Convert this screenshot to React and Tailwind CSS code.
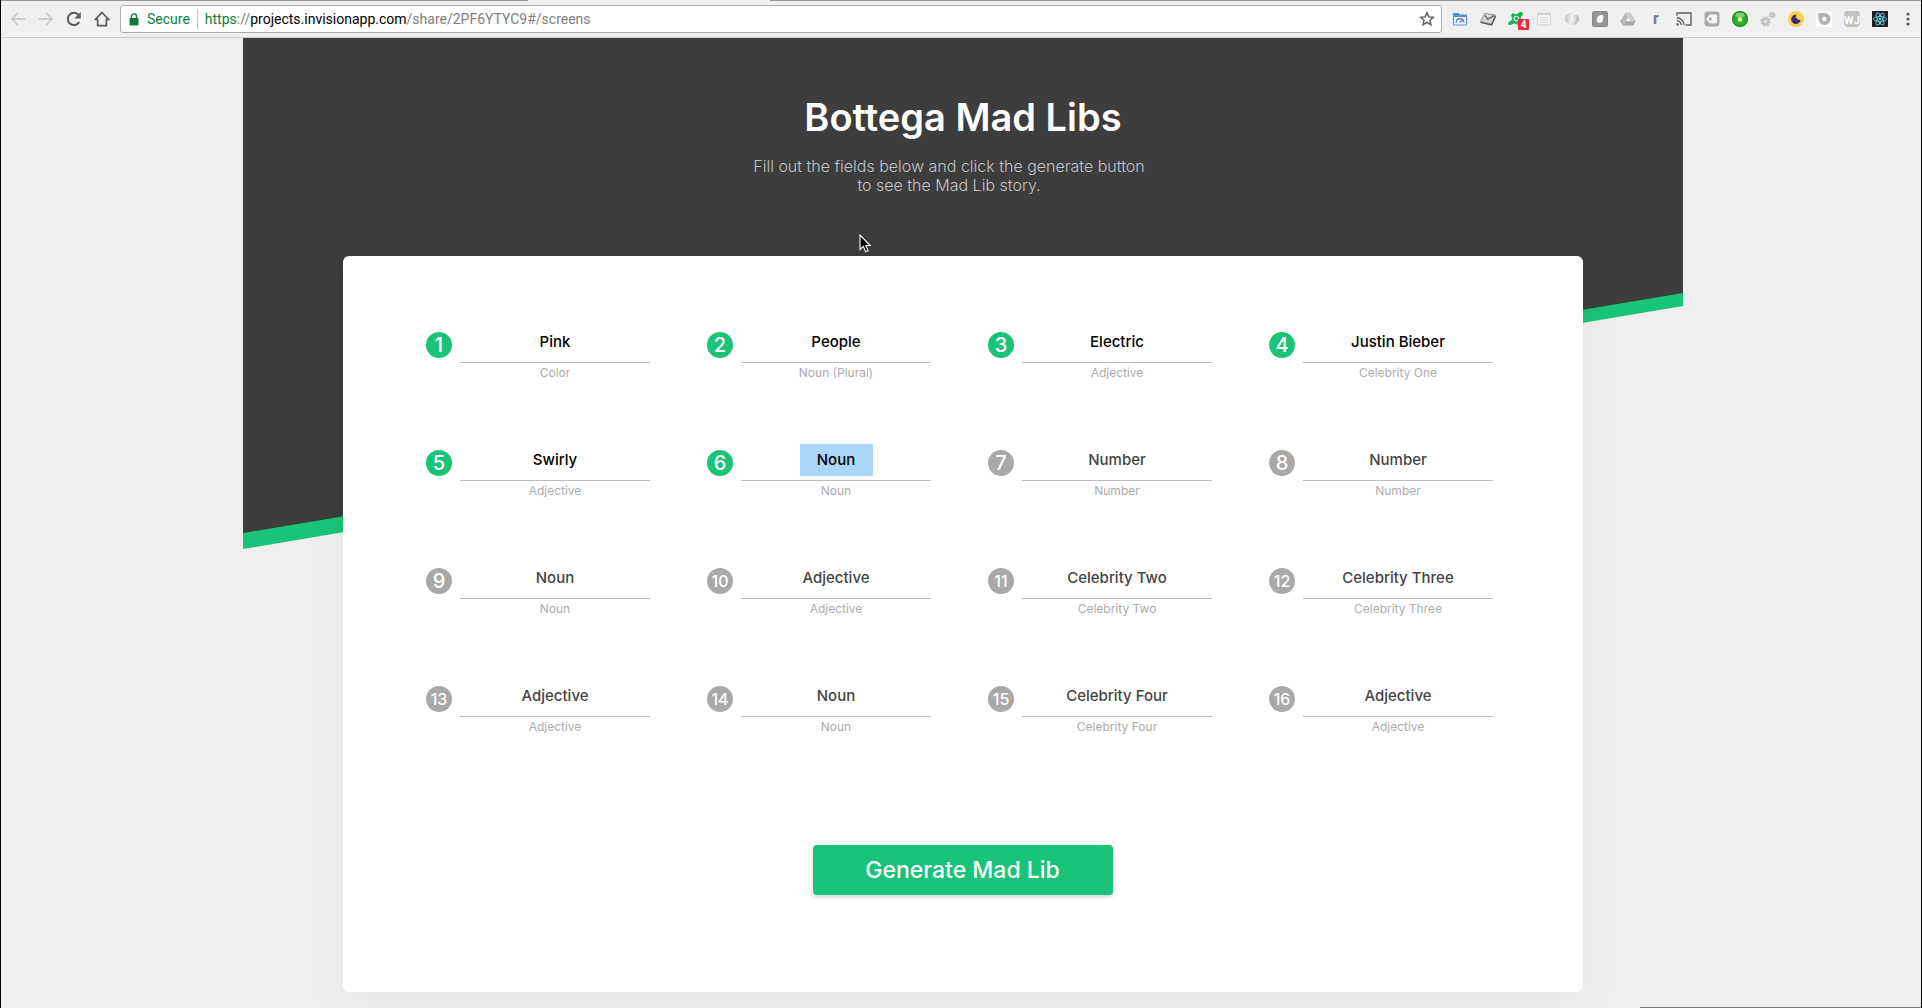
import React from "react";

const FIELDS = [
  { value: "Pink", label: "Color", done: true },
  { value: "People", label: "Noun (Plural)", done: true },
  { value: "Electric", label: "Adjective", done: true },
  { value: "Justin Bieber", label: "Celebrity One", done: true },
  { value: "Swirly", label: "Adjective", done: true },
  { value: "Noun", label: "Noun", done: true, selected: true },
  { value: "Number", label: "Number" },
  { value: "Number", label: "Number" },
  { value: "Noun", label: "Noun" },
  { value: "Adjective", label: "Adjective" },
  { value: "Celebrity Two", label: "Celebrity Two" },
  { value: "Celebrity Three", label: "Celebrity Three" },
  { value: "Adjective", label: "Adjective" },
  { value: "Noun", label: "Noun" },
  { value: "Celebrity Four", label: "Celebrity Four" },
  { value: "Adjective", label: "Adjective" },
];

const svg = { width: 16, height: 16, viewBox: "0 0 16 16", fill: "none" };

function ArrowLeft() {
  return (
    <svg {...svg} stroke="#cfcfcf" strokeWidth="1.9">
      <path d="M15 8H2M8 1.8 1.8 8 8 14.2" />
    </svg>
  );
}

function ArrowRight() {
  return (
    <svg {...svg} stroke="#cfcfcf" strokeWidth="1.9">
      <path d="M1 8h13M8 1.8 14.2 8 8 14.2" />
    </svg>
  );
}

function Reload() {
  return (
    <svg {...svg}>
      <path d="M13.2 11A6.1 6.1 0 1 1 12.4 3.8" stroke="#5a5a5a" strokeWidth="2" />
      <path d="M14.8 1v6.4H8.4z" fill="#5a5a5a" />
    </svg>
  );
}

function Home() {
  return (
    <svg {...svg} stroke="#5a5a5a" strokeWidth="1.7">
      <path d="M8 1.4 1.4 8.5h2.2v6.1h8.8V8.5h2.2z" strokeLinejoin="miter" />
    </svg>
  );
}

function Lock() {
  return (
    <svg width="10" height="13" viewBox="0 0 10 13" fill="none">
      <rect x="0.5" y="5" width="9" height="7.5" rx="0.8" fill="#0b7b3e" />
      <path d="M2.5 5.5V3.4a2.5 2.5 0 0 1 5 0v2.1" stroke="#0b7b3e" strokeWidth="1.4" />
    </svg>
  );
}

function Star() {
  return (
    <svg {...svg} stroke="#5a5a5a" strokeWidth="1.4">
      <path d="m8 1.7 1.8 4.2 4.6.4-3.5 3 1.1 4.5L8 11.4l-4 2.4 1.1-4.5-3.5-3 4.6-.4z" />
    </svg>
  );
}

function GaugeWindow() {
  return (
    <svg {...svg}>
      <path d="M1.5 2.5h5l1 1.500h7v10h-13z" fill="#eef4fd" stroke="#5b8fe0" strokeWidth="1.2" />
      <path d="M1.5 2.5h5l1 1.5h7v2h-13z" fill="#5b8fe0" />
      <path d="M4.200 11.500a3.800 3.800 0 0 1 7.600 0" stroke="#4a83d8" strokeWidth="1.500" />
      <path d="m7.500 11.500 3-2.500" stroke="#d05a5a" strokeWidth="1.200" />
    </svg>
  );
}

function TiltedMail() {
  return (
    <svg {...svg}>
      <path d="M4.800 2.500 15.600 4 11.400 13.200.4 10.600z" fill="#d6d6d6" stroke="#8a8a8a" strokeWidth="0.900" />
      <path d="m5 4.500 2.800 3.800L14 4.600" stroke="#666" strokeWidth="1.300" />
      <path d="m.6 11.400 11 2.500L15.600 5" stroke="#555" strokeWidth="1.300" />
    </svg>
  );
}

function GreenTag() {
  return (
    <span className="relative">
      <svg width="18" height="16" viewBox="0 0 18 16" fill="none">
        <path
          d="M5 2.500c1.600-.8 2.600 1 4.200.8 1.800 0 2.800-2.800 5.200-2.400 2 .5 2.200 2.600.6 3.800-1.600 1-1 2.200-1 4L11 14l-3.500-1.600c-2 0-3.200 2-5.400 1.600C.8 13.600.8 12 2 11c1.600-1.200 3.400-1.800 3-3.600C4.800 5.800 3.400 4 5 2.500z"
          fill="#12b35d"
        />
        <circle cx="9.300" cy="7.500" r="2.300" stroke="#d8f5e5" strokeWidth="1.100" />
      </svg>
      <span className="absolute -right-1 top-2 h-[11px] w-[11px] rounded-[1px] bg-[#e8283c] text-center text-[10px] font-bold leading-[11px] text-white">
        4
      </span>
    </span>
  );
}

function ListWindow() {
  return (
    <svg {...svg}>
      <rect x="1.500" y="2" width="13" height="12" rx="0.800" fill="#f8f8f8" stroke="#d0d0d0" />
      <path d="M1.500 3h13" stroke="#cdcdcd" strokeWidth="2" />
      <path d="M3.500 6.800h9M3.500 9.200h9M3.500 11.600h9" stroke="#d2d2d2" />
    </svg>
  );
}

function Swirl() {
  return (
    <svg {...svg}>
      <path d="M7 1.500C2.500 3 0 6 1 9.500c.7 2 2.500 3 4.500 2.800C3.500 10 3.500 5 7 1.500z" fill="#cfcfcf" />
      <path d="M9 14.500c4.500-1.500 7-4.500 6-8-.7-2-2.500-3-4.500-2.800C12.500 6 12.500 11 9 14.500z" fill="#c2c2c2" />
      <path d="M9 1.800c-3 2-4.500 5-3.500 9.500M7 14c3-2 4.500-5 3.500-9.500" stroke="#d8d8d8" strokeWidth="1.200" />
    </svg>
  );
}

function Leaf() {
  return (
    <svg {...svg}>
      <rect width="16" height="16" rx="2.500" fill="#8c8c8c" />
      <rect x="1.500" y="1.500" width="13" height="13" rx="2" fill="#979797" />
      <path d="M10.800 4c-3-.3-5.600 1-6 4-.3 2 .8 4 2.800 4 3.400 0 4.400-4.500 3.200-8z" fill="#fff" />
    </svg>
  );
}

function Drive() {
  return (
    <svg {...svg}>
      <path d="M5.300 1.800h5.400l5.100 8.400h-5.200z" fill="#cacaca" />
      <path d="M5.300 1.800 8 6.300 2.900 14.500.2 10.200z" fill="#b7b7b7" />
      <path d="M5.500 10.200h10.300l-2.700 4.300H2.900z" fill="#a9a9a9" />
    </svg>
  );
}

function Cast() {
  return (
    <svg {...svg} stroke="#5f5f5f" strokeWidth="1.400">
      <path d="M1 4.800V2h14v12H9.500" />
      <path d="M.8 6.800a7.200 7.200 0 0 1 7.200 7.200M.8 9.600A4.400 4.400 0 0 1 5.200 14" />
      <path d="M.5 12v2.600h2.600A2.600 2.600 0 0 0 .5 12z" fill="#5f5f5f" stroke="none" />
    </svg>
  );
}

function GreyTag() {
  return (
    <svg {...svg}>
      <rect x="0.500" y="0.500" width="15" height="15" rx="3" fill="#a9a9a9" />
      <path d="M6 4h6.500v8H6L2.500 8z" fill="#f5f5f5" stroke="#f5f5f5" strokeLinejoin="round" />
      <circle cx="6.300" cy="8" r="1.400" fill="#a0a0a0" />
    </svg>
  );
}

function GreenOrb() {
  return (
    <svg {...svg}>
      <circle cx="8" cy="8" r="8" fill="#168a16" />
      <circle cx="8" cy="8" r="6.800" fill="#2fae28" />
      <ellipse cx="8" cy="4" rx="4.500" ry="2.200" fill="#7ed070" />
      <circle cx="8" cy="8.500" r="2.400" fill="#c9f7a8" />
    </svg>
  );
}

function Gears() {
  return (
    <svg {...svg} stroke="#c2c2c2">
      <circle cx="5.500" cy="10.500" r="2.700" strokeWidth="2.600" />
      <circle cx="5.500" cy="10.500" r="4.500" strokeWidth="1.600" strokeDasharray="1.800 1.734" />
      <circle cx="12.200" cy="4" r="1.600" strokeWidth="1.800" />
      <circle cx="12.200" cy="4" r="2.900" strokeWidth="1.200" strokeDasharray="1.200 1.077" />
    </svg>
  );
}

function Moon() {
  return (
    <svg {...svg}>
      <circle cx="8" cy="8" r="8" fill="#fbd04f" />
      <path d="M8.200 3.500A4.800 4.800 0 1 0 12.700 9 4 4 0 0 1 8.200 3.500z" fill="#3f2a7d" />
    </svg>
  );
}

function Disc() {
  return (
    <svg {...svg}>
      <rect width="16" height="16" fill="#fff" />
      <path d="M2 2h6.500a6 6 0 1 1-6 6z" fill="#b2b2b2" />
      <circle cx="8.300" cy="8" r="2.200" fill="#fff" />
    </svg>
  );
}

function WjBadge() {
  return (
    <span className="h-4 w-4 overflow-hidden rounded-sm bg-[#c2c2c2] pt-0.5 text-center text-[11px] font-bold leading-[15px] text-white">
      WJ
    </span>
  );
}

function Atom() {
  return (
    <svg {...svg}>
      <rect width="16" height="16" fill="#202020" />
      <g stroke="#5ccbe8" strokeWidth="0.900">
        <ellipse cx="8" cy="8" rx="6.600" ry="2.500" />
        <ellipse cx="8" cy="8" rx="6.600" ry="2.500" transform="rotate(60 8 8)" />
        <ellipse cx="8" cy="8" rx="6.600" ry="2.500" transform="rotate(120 8 8)" />
      </g>
      <circle cx="8" cy="8" r="1.300" fill="#5ccbe8" />
    </svg>
  );
}

function Dots() {
  return (
    <svg {...svg} fill="#5a5a5a">
      <circle cx="8" cy="3" r="1.600" />
      <circle cx="8" cy="8" r="1.600" />
      <circle cx="8" cy="13" r="1.600" />
    </svg>
  );
}

function LetterR() {
  return <span className="text-base font-bold leading-4 text-[#7d7d7d]">r</span>;
}

const EXTENSIONS = [
  ["Page speed", GaugeWindow],
  ["Mail", TiltedMail],
  ["Notifications", GreenTag],
  ["Reader", ListWindow],
  ["Sync", Swirl],
  ["Evergreen", Leaf],
  ["Drive", Drive],
  ["Reddit", LetterR],
  ["Cast", Cast],
  ["Tags", GreyTag],
  ["Status", GreenOrb],
  ["Settings", Gears],
  ["Night mode", Moon],
  ["Disc", Disc],
  ["WJ", WjBadge],
  ["React tools", Atom],
  ["Menu", Dots],
];

function IconButton({ name, icon: Icon }) {
  return (
    <button type="button" aria-label={name} className="flex h-7 w-7 shrink-0 items-center justify-center">
      <Icon />
    </button>
  );
}

function Toolbar() {
  return (
    <div className="border-b border-[#cbcbcb] bg-[#f0f0f0] font-[Roboto,sans-serif]">
      <div className="flex h-px">
        <div className="w-[527px] bg-[#979597]" />
        <div className="w-[242px]" />
        <div className="flex-1 bg-[#979597]" />
      </div>
      <nav className="-mr-px flex h-9 items-center pl-[3px]" aria-label="Browser">
        <IconButton name="Back" icon={ArrowLeft} />
        <IconButton name="Forward" icon={ArrowRight} />
        <IconButton name="Reload" icon={Reload} />
        <IconButton name="Home" icon={Home} />
        <div className="ml-1 mr-1 flex h-7 min-w-0 flex-1 items-center rounded-[3px] border border-[#aeaeae] bg-white pl-2 text-sm">
          <Lock />
          <span className="ml-2 text-[#0b7b3e]">Secure</span>
          <span className="mx-[7px] h-5 w-px bg-[#c4c4c4]" />
          <a href="#/screens" className="flex-1 truncate text-[#808080]">
            <span className="text-[#0b7b3e]">https</span>://
            <span className="text-black">projects.invisionapp.com</span>/share/2PF6YTYC9#/screens
          </a>
          <IconButton name="Bookmark" icon={Star} />
        </div>
        {EXTENSIONS.map(([name, icon]) => (
          <IconButton key={name} name={name} icon={icon} />
        ))}
      </nav>
    </div>
  );
}

function Field({ number, value, label, done, selected }) {
  const id = `field-${number}`;
  return (
    <div className="flex gap-2">
      <span
        className={`mt-1.5 flex h-[26px] w-[26px] shrink-0 items-center justify-center rounded-full font-medium text-white ${
          done ? "bg-[#19c377]" : "bg-[#a9a9a9]"
        } ${number > 9 ? "text-base" : "text-xl"}`}
      >
        {number}
      </span>
      <div className="flex min-w-0 flex-1 flex-col items-center">
        <input
          id={id}
          type="text"
          defaultValue={value}
          className={`h-8 pb-0.5 text-center text-[15px] font-medium outline-none ${
            selected ? "w-[73px] bg-[#abd7fb]" : "w-full"
          } ${done ? "text-black" : "text-[#444444]"}`}
        />
        <label
          htmlFor={id}
          className="mt-1 w-full border-t border-[#bdbdbd] text-center text-xs leading-5 text-[#acacac]"
        >
          {label}
        </label>
      </div>
    </div>
  );
}

function Hero() {
  return (
    <div className="col-start-1 row-start-1 h-[511px] bg-[#19c377] [clip-path:polygon(0_0,100%_0,100%_268px,0_100%)]">
      <div className="h-[495px] bg-[#3d3d3d] [clip-path:polygon(0_0,100%_0,100%_255px,0_100%)]" />
    </div>
  );
}

export default function App() {
  return (
    <div className="relative min-h-screen border-x border-black bg-[#efefef] font-[Inter,sans-serif]">
      <Toolbar />
      <main className="pl-1">
        <div className="mx-auto grid w-full max-w-[1440px]">
          <Hero />
          <div className="z-10 col-start-1 row-start-1 px-[100px]">
            <header className="pb-[61px] pt-[59px] text-center">
              <h1 className="text-[38px] font-semibold leading-10 text-white">Bottega Mad Libs</h1>
              <p className="mt-5 pr-7 text-base font-light leading-[19px] text-[#c4c4c4]">
                Fill out the fields below and click the generate button
                <br />
                to see the Mad Lib story.
              </p>
            </header>
            <form
              className="rounded-md bg-white pb-[97px] pl-[83px] pr-[90px] pt-[70px] shadow-[0_4px_40px_rgba(0,0,0,0.06)]"
              onSubmit={(e) => e.preventDefault()}
            >
              <div className="grid grid-cols-4 gap-x-[57px] gap-y-[61px]">
                {FIELDS.map((f, i) => (
                  <Field key={i} number={i + 1} {...f} />
                ))}
              </div>
              <div className="mt-[108px] flex justify-center pl-1.5">
                <button
                  type="submit"
                  className="h-[50px] w-[300px] rounded bg-[#19c377] text-[23px] font-medium text-white shadow-[0_2px_4px_rgba(0,0,0,0.18)]"
                >
                  Generate Mad Lib
                </button>
              </div>
            </form>
          </div>
        </div>
      </main>
      <div className="absolute bottom-0 right-0 h-px w-[281px] bg-[#777777]" />
      <svg
        className="absolute left-[858px] top-[234px] z-20"
        width="13"
        height="19"
        viewBox="0 0 13 19"
        aria-hidden="true"
      >
        <path
          d="M1 1v14.500l3.300-3.100 2.300 5.300 2.500-1.100-2.300-5.100h4.500z"
          fill="#000"
          stroke="#fff"
          strokeWidth="1.100"
        />
      </svg>
    </div>
  );
}
